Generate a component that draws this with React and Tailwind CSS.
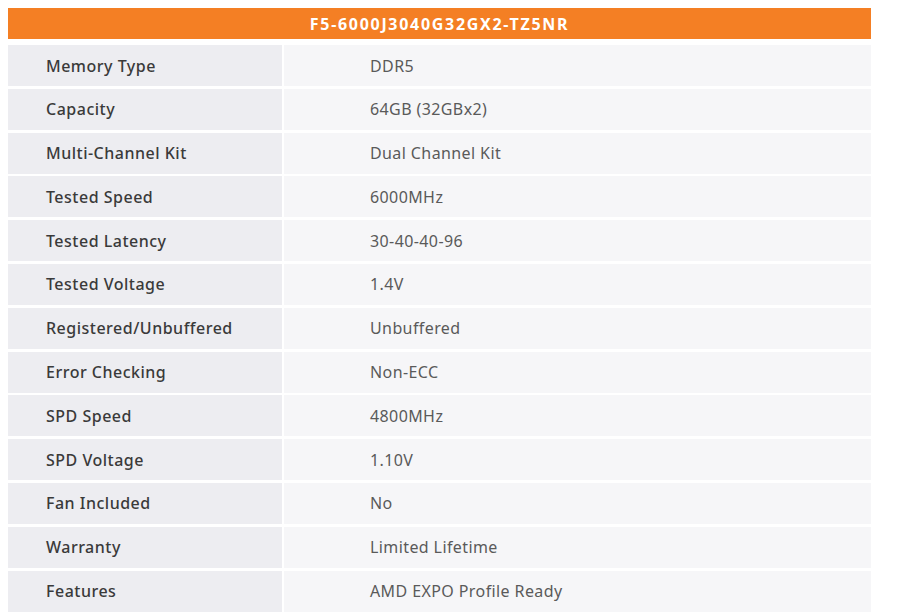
import React from "react";

const rows = [
  ["Memory Type", "DDR5"],
  ["Capacity", "64GB (32GBx2)"],
  ["Multi-Channel Kit", "Dual Channel Kit"],
  ["Tested Speed", "6000MHz"],
  ["Tested Latency", "30-40-40-96"],
  ["Tested Voltage", "1.4V"],
  ["Registered/Unbuffered", "Unbuffered"],
  ["Error Checking", "Non-ECC"],
  ["SPD Speed", "4800MHz"],
  ["SPD Voltage", "1.10V"],
  ["Fan Included", "No"],
  ["Warranty", "Limited Lifetime"],
  ["Features", "AMD EXPO Profile Ready"],
];

export default function App() {
  return (
    <div
      className="w-[901px] h-[616px] bg-white overflow-hidden"
      style={{ fontFamily: '"Noto Sans", "Open Sans", sans-serif' }}
    >
      <div className="ml-[8px] mt-[8px] w-[863px] flex flex-col">
        <div className="h-[31px] bg-[#f47f24] flex items-center justify-center text-white font-bold text-[16px] tracking-[1.7px]">
          F5-6000J3040G32GX2-TZ5NR
        </div>
        <div className="mt-[6px] flex flex-col gap-[2.8px]">
          {rows.map(([k, v]) => (
            <div key={k} className="flex h-[41px] gap-[2px]">
              <div className="w-[274px] bg-[#ededf1] flex items-center pl-[38px] text-[16px] font-medium tracking-[0.5px] text-[#3a3a3a]">
                {k}
              </div>
              <div className="flex-1 bg-[#f6f6f8] flex items-center pl-[86px] text-[16px] tracking-[0.4px] text-[#5a5a5a]">
                {v}
              </div>
            </div>
          ))}
        </div>
      </div>
    </div>
  );
}
